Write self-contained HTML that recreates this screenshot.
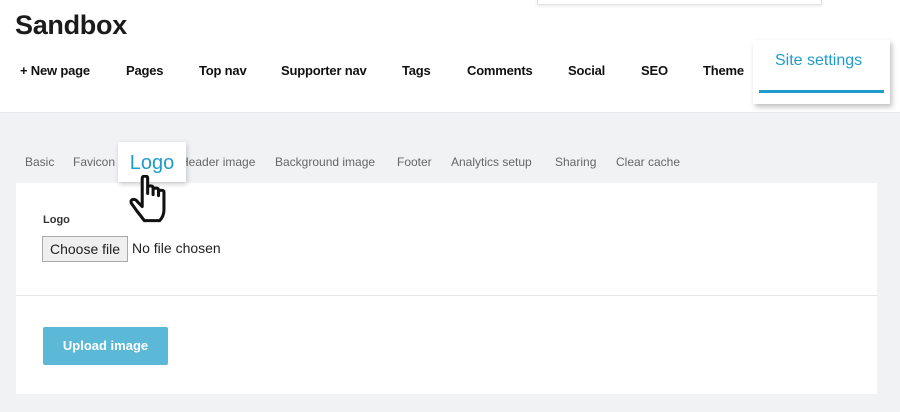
<!DOCTYPE html>
<html><head><style>
body{margin:0;width:900px;height:412px;overflow:hidden;background:#f1f2f4;font-family:"Liberation Sans",sans-serif;position:relative}
.hdr{position:absolute;left:0;top:0;width:900px;height:112px;background:#fff;border-bottom:1px solid #e6e7ea}
.topbox{position:absolute;left:537px;top:-2px;width:283px;height:5px;border:1px solid #e3e3e3;box-shadow:0 1px 3px rgba(0,0,0,.1);background:#fff}
h1{position:absolute;left:15px;top:10px;margin:0;font-size:27px;font-weight:bold;color:#1b1b1b;letter-spacing:-.3px}
.nav span{position:absolute;top:63px;font-size:13px;font-weight:bold;color:#111;letter-spacing:-.2px}
.ss{position:absolute;left:753px;top:40px;width:137px;height:64px;background:#fff;box-shadow:2px 3px 5px rgba(0,0,0,.25)}
.ss div{position:absolute;left:22px;top:12px;color:#1f9ccc;font-size:16px}
.ss i{position:absolute;left:6px;top:50px;width:125px;height:3px;background:#1f9ccc}
.tabs span{position:absolute;top:155px;font-size:12px;color:#666}
.logo{position:absolute;left:118px;top:142px;width:68px;height:40px;background:#fff;box-shadow:1px 2px 5px rgba(0,0,0,.2);color:#1f9ccc;font-size:20px;text-align:center;line-height:42px}
.card{position:absolute;left:16px;top:183px;width:861px;height:211px;background:#fff}
.card hr{position:absolute;left:0;top:112px;width:861px;margin:0;border:0;border-top:1px solid #e5e6e9}
.lbl{position:absolute;left:27px;top:31px;font-size:11px;font-weight:bold;color:#333}
.cf{position:absolute;left:26px;top:53px;width:84px;height:24px;border:1px solid #aaa;background:#efefef;font-size:14px;line-height:24px;text-align:center;color:#222}
.nf{position:absolute;left:116px;top:57px;font-size:14px;color:#222}
.btn{position:absolute;left:27px;top:144px;width:125px;height:38px;background:#5bb8d6;border-radius:2px;color:#fff;font-size:13px;font-weight:bold;text-align:center;line-height:38px}
</style></head><body>
<div class="hdr"></div>
<div class="topbox"></div>
<h1>Sandbox</h1>
<div class="nav">
<span style="left:20px">+ New page</span><span style="left:126px">Pages</span><span style="left:199px">Top nav</span><span style="left:281px">Supporter nav</span><span style="left:402px">Tags</span><span style="left:467px">Comments</span><span style="left:568px">Social</span><span style="left:641px">SEO</span><span style="left:703px">Theme</span>
</div>
<div class="ss"><div>Site settings</div><i></i></div>
<div class="tabs">
<span style="left:25px">Basic</span><span style="left:73px">Favicon</span><span style="left:180px">Header image</span><span style="left:275px">Background image</span><span style="left:397px">Footer</span><span style="left:451px">Analytics setup</span><span style="left:555px">Sharing</span><span style="left:616px">Clear cache</span>
</div>
<div class="card">
<hr>
<div class="lbl">Logo</div>
<div class="cf">Choose file</div>
<div class="nf">No file chosen</div>
<div class="btn">Upload image</div>
</div>
<div class="logo">Logo</div>
<svg style="position:absolute;left:128px;top:175px" width="48" height="50" viewBox="0 0 44 46">
<path d="M13 3 Q13 1 15.5 1 Q18 1 18 3 L18 17 L18 12 Q18 10 20.5 10 Q23 10 23 12 L23 18 L23 14 Q23 12 25.5 12 Q28 12 28 14 L28 19 L28 16 Q28 14 30.5 14 Q33 14 33 16 L33 32 Q33 38 29 42 L15 42 Q12 38 8 33 L3 26 Q2 23 4.5 22.5 Q7 22 9 25 L13 29 Z" fill="#fff" stroke="#111" stroke-width="2.8" stroke-linejoin="round"/>
</svg>
</body></html>
